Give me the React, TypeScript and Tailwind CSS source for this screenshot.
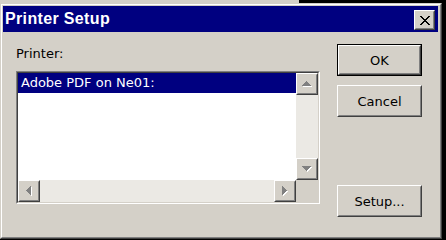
import React from "react";

function Raised({
  className = "",
  children,
}: {
  className?: string;
  children?: React.ReactNode;
}) {
  return (
    <div
      className={`border border-t-white border-l-white border-r-[#404040] border-b-[#404040] bg-[#d4d0c8] ${className}`}
    >
      <div className="w-full h-full border border-t-[#d4d0c8] border-l-[#d4d0c8] border-r-[#808080] border-b-[#808080] flex items-center justify-center">
        {children}
      </div>
    </div>
  );
}

function Arrow({ dir }: { dir: "up" | "down" | "left" | "right" }) {
  const rects: { x: number; y: number; w: number; h: number }[] = [];
  for (let i = 0; i < 5; i++) {
    if (dir === "up") rects.push({ x: 4 - i, y: i, w: 2 * i + 1, h: 1 });
    if (dir === "down") rects.push({ x: i, y: i, w: 9 - 2 * i, h: 1 });
    if (dir === "left") rects.push({ x: i, y: 4 - i, w: 1, h: 2 * i + 1 });
    if (dir === "right") rects.push({ x: i, y: i, w: 1, h: 9 - 2 * i });
  }
  const vertical = dir === "up" || dir === "down";
  const w = vertical ? 10 : 6;
  const h = vertical ? 6 : 10;
  return (
    <svg width={w} height={h} viewBox={`0 0 ${w} ${h}`} shapeRendering="crispEdges">
      {rects.map((r, i) => (
        <rect key={"s" + i} x={r.x + 1} y={r.y + 1} width={r.w} height={r.h} fill="#ffffff" />
      ))}
      {rects.map((r, i) => (
        <rect key={"g" + i} x={r.x} y={r.y} width={r.w} height={r.h} fill="#808080" />
      ))}
    </svg>
  );
}

function PushButton({ label, isDefault = false }: { label: string; isDefault?: boolean }) {
  if (isDefault) {
    return (
      <div className="w-[85px] h-[32px] border border-black">
        <Raised className="w-full h-full">
          <span className="text-[13px] leading-[15px] text-black">{label}</span>
        </Raised>
      </div>
    );
  }
  return (
    <Raised className="w-[85px] h-[32px]">
      <span className="text-[13px] leading-[15px] text-black">{label}</span>
    </Raised>
  );
}

export default function App() {
  return (
    <div className="w-[446px] h-[240px] bg-black flex flex-col overflow-hidden font-['DejaVu_Sans',sans-serif]">
      {/* strip above the dialog */}
      <div className="h-[3px] flex">
        <div className="w-[299px] bg-[#d4d0c8]" />
        <div className="flex-1 bg-black" />
      </div>
      <div className="flex h-[236px]">
        {/* dialog */}
        <div className="w-[442px] h-[236px] border border-t-[#d4d0c8] border-l-[#d4d0c8] border-r-[#404040] border-b-[#404040]">
          <div className="w-full h-full border border-t-white border-l-white border-r-[#808080] border-b-[#808080] bg-[#d4d0c8] pl-[1px] pr-[2px] pt-[1px] flex flex-col">
            {/* title bar */}
            <div className="h-[26px] bg-[#000080] flex items-start justify-between">
              <span className="pl-[2px] pt-[4px] text-[16px] leading-[18px] font-bold text-white tracking-[0.35px] font-['Liberation_Sans',sans-serif]">
                Printer Setup
              </span>
              <Raised className="w-[21px] h-[20px] mt-[4px] mr-[3px]">
                <svg width="10" height="9" viewBox="0 0 10 9" shapeRendering="crispEdges">
                  <path d="M0 0 L2 0 L5 3.5 L8 0 L10 0 L6 4.5 L10 9 L8 9 L5 5.5 L2 9 L0 9 L4 4.5 Z" fill="#000" />
                </svg>
              </Raised>
            </div>
            {/* body */}
            <div className="flex flex-1">
              <div className="ml-[13px] flex flex-col">
                <div className="mt-[14px] h-[15px] text-[13px] leading-[15px] text-black">Printer:</div>
                <div className="mt-[10px] w-[304px] h-[133px] border border-t-[#808080] border-l-[#808080] border-r-white border-b-white">
                  <div className="w-full h-full border border-t-[#404040] border-l-[#404040] border-r-[#d4d0c8] border-b-[#d4d0c8] flex flex-col bg-white">
                    <div className="flex flex-1 min-h-0">
                      <div className="flex-1 bg-white">
                        <div className="h-[20px] bg-[#000080] text-white pl-[3px] text-[13px] leading-[20px]">
                          Adobe PDF on Ne01:
                        </div>
                      </div>
                      <div className="w-[22px] flex flex-col">
                        <Raised className="w-[22px] h-[22px]">
                          <Arrow dir="up" />
                        </Raised>
                        <div className="flex-1 bg-[#ebe9e4]" />
                        <Raised className="w-[22px] h-[22px]">
                          <Arrow dir="down" />
                        </Raised>
                      </div>
                    </div>
                    <div className="flex h-[22px]">
                      <div className="flex-1 flex">
                        <Raised className="w-[22px] h-[22px]">
                          <Arrow dir="left" />
                        </Raised>
                        <div className="flex-1 bg-[#ebe9e4]" />
                        <Raised className="w-[22px] h-[22px]">
                          <Arrow dir="right" />
                        </Raised>
                      </div>
                      <div className="w-[22px] bg-[#d4d0c8]" />
                    </div>
                  </div>
                </div>
              </div>
              <div className="ml-[17px] flex flex-col">
                <div className="mt-[12px]">
                  <PushButton label="OK" isDefault />
                </div>
                <div className="mt-[9px]">
                  <PushButton label="Cancel" />
                </div>
                <div className="mt-[68px]">
                  <PushButton label="Setup..." />
                </div>
              </div>
            </div>
          </div>
        </div>
        <div className="flex-1 bg-black" />
      </div>
    </div>
  );
}
